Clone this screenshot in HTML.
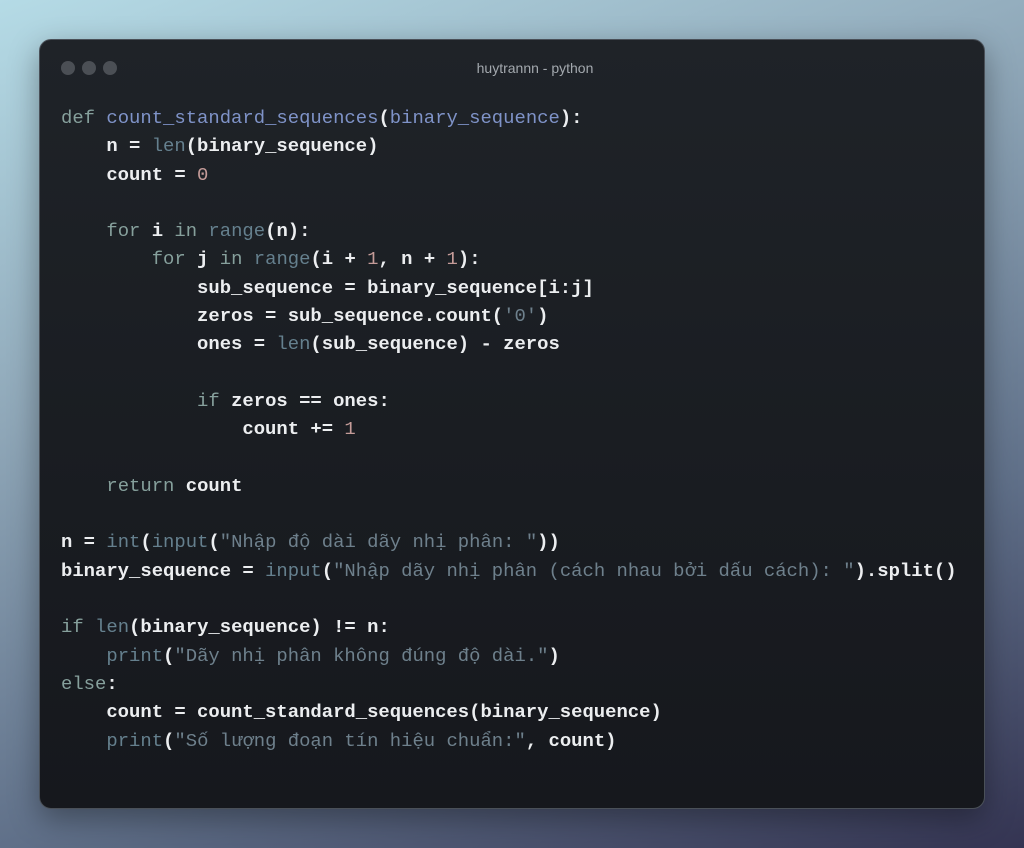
<!DOCTYPE html>
<html><head><meta charset="utf-8"><style>
html,body{margin:0;padding:0;width:1024px;height:848px;overflow:hidden}
body{background:linear-gradient(160deg,#b5dbe6 0%,#8fa7b8 35%,#5f6f88 70%,#343452 100%);position:relative}
.win{position:absolute;left:39px;top:39px;width:946px;height:770px;box-sizing:border-box;border-radius:12px;border:1px solid #4a5058;background:linear-gradient(180deg,#1f2328 0%,#191c21 60%,#16181d 100%);box-shadow:0 10px 30px rgba(0,0,0,.35)}
.dot{position:absolute;top:21px;width:14px;height:14px;border-radius:50%;background:#4b4f55}
.title{position:absolute;top:20px;left:0;right:0;text-align:center;font:14px "Liberation Sans",sans-serif;color:#a3a8ae;padding-left:46px}
pre{position:absolute;left:21px;top:64px;margin:0;font:bold 18.9px/28.3px "Liberation Mono","DejaVu Sans Mono",monospace;color:#eceef0}
.k{color:#86a09c;font-weight:normal}.f{color:#7f93c8;font-weight:normal}.b{color:#65808e;font-weight:normal}.n{color:#c49b98;font-weight:normal}.s{color:#6e808c;font-weight:normal}
</style></head><body>
<div class="win">
<div class="dot" style="left:21px"></div><div class="dot" style="left:42px"></div><div class="dot" style="left:63px"></div>
<div class="title">huytrannn - python</div>
<pre><span class="k">def</span> <span class="f">count_standard_sequences</span>(<span class="f">binary_sequence</span>):
    n = <span class="b">len</span>(binary_sequence)
    count = <span class="n">0</span>

    <span class="k">for</span> i <span class="k">in</span> <span class="b">range</span>(n):
        <span class="k">for</span> j <span class="k">in</span> <span class="b">range</span>(i + <span class="n">1</span>, n + <span class="n">1</span>):
            sub_sequence = binary_sequence[i:j]
            zeros = sub_sequence.count(<span class="s">'0'</span>)
            ones = <span class="b">len</span>(sub_sequence) - zeros

            <span class="k">if</span> zeros == ones:
                count += <span class="n">1</span>

    <span class="k">return</span> count

n = <span class="b">int</span>(<span class="b">input</span>(<span class="s">"Nhập độ dài dãy nhị phân: "</span>))
binary_sequence = <span class="b">input</span>(<span class="s">"Nhập dãy nhị phân (cách nhau bởi dấu cách): "</span>).split()

<span class="k">if</span> <span class="b">len</span>(binary_sequence) != n:
    <span class="b">print</span>(<span class="s">"Dãy nhị phân không đúng độ dài."</span>)
<span class="k">else</span>:
    count = count_standard_sequences(binary_sequence)
    <span class="b">print</span>(<span class="s">"Số lượng đoạn tín hiệu chuẩn:"</span>, count)</pre>
</div>
</body></html>
